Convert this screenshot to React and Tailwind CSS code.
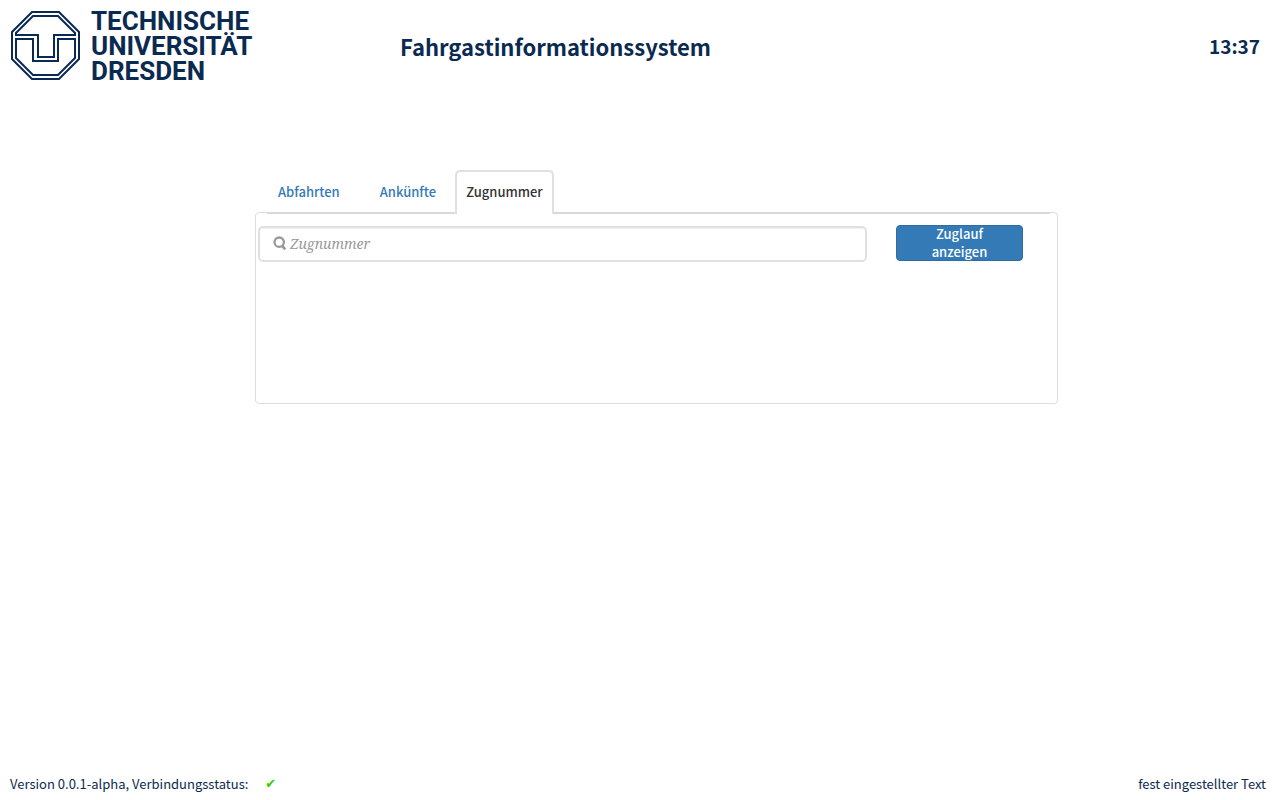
import { useState } from 'react';

function Emblem() {
  return (
    <svg viewBox="0 0 70 70" className="h-[70px] w-[70px] shrink-0" fill="none" stroke="#0b2a51" strokeWidth="2" aria-hidden="true">
      <path d="M21 1H48L68 21V48L48 68H21L1 48V21Z" />
      <path d="M22 5H47L64 22V24H43V46H27V24H5V22Z" />
      <path d="M5 28H22V50H47V28H64V47L47 64H22L5 47Z" />
    </svg>
  );
}

function SearchIcon() {
  return (
    <svg viewBox="0 0 14 14" className="pointer-events-none absolute left-[15px] top-[10px] h-[14px] w-[14px]" fill="none" stroke="#999" aria-hidden="true">
      <circle cx="6.2" cy="6.2" r="4.7" strokeWidth="2.3" />
      <path d="M8.8 9.4L12.2 13.3" strokeWidth="2.8" />
    </svg>
  );
}

const tabs = ['Abfahrten', 'Ankünfte', 'Zugnummer'];

export default function App() {
  const [active, setActive] = useState('Zugnummer');
  return (
    <div className="flex min-h-screen flex-col bg-white font-['Noto_Sans_CJK_SC','Noto_Sans',sans-serif] text-[13px] font-medium leading-[18px] text-[#0b2a51]">
      <header className="flex h-[170px] items-start pl-[11px] pr-5 pt-[11px]">
        <a href="#" className="flex w-[389px] shrink-0 gap-[10px]">
          <Emblem />
          <span className="-mt-[2px] font-[Roboto,sans-serif] text-[26px] font-bold leading-[25px]">
            TECHNISCHE<br />UNIVERSITÄT<br />DRESDEN
          </span>
        </a>
        <h1 className="mt-[19px] text-[22px] font-bold leading-8">Fahrgastinformationssystem</h1>
        <time className="ml-auto mt-[19px] text-[19px] font-bold leading-8">13:37</time>
      </header>

      <main className="ml-[255px] mr-[222px]">
        <div role="tablist" className="relative z-10 ml-3 mr-2 -mb-[2px] flex border-b-2 border-[#d9d9d9]">
          {tabs.map((tab) => (
            <button
              key={tab}
              type="button"
              role="tab"
              aria-selected={active === tab}
              onClick={() => setActive(tab)}
              className={
                active === tab
                  ? '-mb-[2px] h-[44px] rounded-t-[5px] border-2 border-b-0 border-[#e0e0e0] bg-white px-[9px] pb-[2px] text-[#333]'
                  : 'h-[42px] px-[11px] pt-[2px] text-[#337ab7] odd:mr-[18px] even:mr-[8px]'
              }
            >
              {tab}
            </button>
          ))}
        </div>
        <form
          className="flex h-[192px] items-start rounded-[4px] border border-[#ddd] pl-[2px] pr-[34px] pt-[12px]"
          onSubmit={(e) => e.preventDefault()}
        >
          <div className="relative mr-[29px] mt-[1px] flex-1">
            <SearchIcon />
            <input
              type="text"
              aria-label="Zugnummer"
              placeholder="Zugnummer"
              className="h-[36px] w-full rounded-[5px] border-2 border-[#e0e0e0] pb-[2px] pl-[30px] pr-3 font-['Noto_Serif','Source_Serif_Pro','Droid_Serif','Liberation_Serif',serif] text-[14px] font-normal not-italic text-[#555] shadow-[inset_0_1px_1px_rgba(0,0,0,0.06)] placeholder:italic placeholder:text-[#999]"
            />
          </div>
          <button type="submit" className="flex h-[36px] w-[127px] items-start justify-center rounded-[4px] border border-[#2e6da4] bg-[#337ab7] px-6 text-white">
            <span className="-mt-[1px]">Zuglauf anzeigen</span>
          </button>
        </form>
      </main>

      <footer className="mt-auto flex items-center pb-[7px] pl-[10px] pr-[14px] font-normal">
        <span>Version 0.0.1-alpha, Verbindungsstatus:</span>
        <span className="ml-[17px] font-['DejaVu_Sans',sans-serif] text-[#33cc00]">✔</span>
        <span className="ml-auto">fest eingestellter Text</span>
      </footer>
    </div>
  );
}
